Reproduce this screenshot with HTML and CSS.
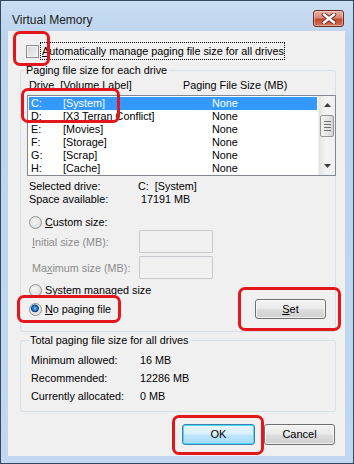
FILE: index.html
```html
<!DOCTYPE html>
<html lang="en">
<head>
    <meta charset="UTF-8">
    <meta name="viewport" content="width=device-width, initial-scale=1.0">
    <title>Virtual Memory</title>
    <link rel="stylesheet" href="styles.css">
</head>
<body>
    <div class="window">
        <div class="titlebar">
            <span class="title">Virtual Memory</span>
            <div class="close">
                <svg width="16" height="11" viewBox="0 0 16 11">
                    <path d="M3 1.5 L13 9.5 M13 1.5 L3 9.5" stroke="#6b2a22" stroke-width="4.4" stroke-linecap="round"/>
                    <path d="M3 1.5 L13 9.5 M13 1.5 L3 9.5" stroke="#fff" stroke-width="2.6" stroke-linecap="round"/>
                </svg>
            </div>
        </div>

        <div class="client">
            <div class="auto-row">
                <span class="checkbox"></span>
                <span class="focus-label"><u>A</u>utomatically manage paging file size for all drives</span>
            </div>

            <fieldset class="group group-drives">
                <legend>Paging file size for each drive</legend>
                <div class="list-head">
                    <span class="col-drive"><u>D</u>rive&nbsp; [Volume Label]</span>
                    <span>Paging File Size (MB)</span>
                </div>
                <div class="listbox">
                    <div class="rows">
                        <div class="row selected"><span class="c1">C:</span><span class="c2">[System]</span><span>None</span></div>
                        <div class="row"><span class="c1">D:</span><span class="c2">[X3 Terran Conflict]</span><span>None</span></div>
                        <div class="row"><span class="c1">E:</span><span class="c2">[Movies]</span><span>None</span></div>
                        <div class="row"><span class="c1">F:</span><span class="c2">[Storage]</span><span>None</span></div>
                        <div class="row"><span class="c1">G:</span><span class="c2">[Scrap]</span><span>None</span></div>
                        <div class="row"><span class="c1">H:</span><span class="c2">[Cache]</span><span>None</span></div>
                    </div>
                    <div class="scrollbar">
                        <div class="sb-btn">
                            <svg width="7" height="4" viewBox="0 0 7 4"><path d="M0 4 L3.5 0 L7 4 Z" fill="#3c3c3c"/></svg>
                        </div>
                        <div class="sb-track">
                            <div class="sb-thumb"><span></span><span></span><span></span><span></span></div>
                        </div>
                        <div class="sb-btn">
                            <svg width="7" height="4" viewBox="0 0 7 4"><path d="M0 0 L7 0 L3.5 4 Z" fill="#3c3c3c"/></svg>
                        </div>
                    </div>
                </div>

                <div class="info">
                    <div class="info-row"><span class="info-label">Selected drive:</span><span>C:&nbsp; [System]</span></div>
                    <div class="info-row"><span class="info-label">Space available:</span><span>&nbsp;17191 MB</span></div>
                </div>

                <div class="radio-row custom">
                    <span class="radio"></span><span><u>C</u>ustom size:</span>
                </div>
                <div class="size-row">
                    <span class="size-label"><u>I</u>nitial size (MB):</span>
                    <span class="textbox"></span>
                </div>
                <div class="size-row">
                    <span class="size-label">Ma<u>x</u>imum size (MB):</span>
                    <span class="textbox"></span>
                </div>
                <div class="radio-row system">
                    <span class="radio"></span><span>S<u>y</u>stem managed size</span>
                </div>
                <div class="last-row">
                    <div class="radio-row">
                        <span class="radio checked"></span><span><u>N</u>o paging file</span>
                    </div>
                    <button class="btn set-btn"><u>S</u>et</button>
                </div>
            </fieldset>

            <fieldset class="group group-total">
                <legend>Total paging file size for all drives</legend>
                <div class="total-row"><span class="total-label">Minimum allowed:</span><span>16 MB</span></div>
                <div class="total-row"><span class="total-label">Recommended:</span><span>12286 MB</span></div>
                <div class="total-row"><span class="total-label">Currently allocated:</span><span>0 MB</span></div>
            </fieldset>

            <div class="buttons">
                <button class="btn ok-btn">OK</button>
                <button class="btn cancel-btn">Cancel</button>
            </div>
        </div>

        <!-- red annotation marks drawn over the dialog -->
        <div class="mark mark-check"></div>
        <div class="mark mark-drive"></div>
        <div class="mark mark-nopaging"></div>
        <div class="mark mark-set"></div>
        <div class="mark mark-ok"></div>
    </div>
</body>
</html>
```

FILE: styles.css
```css
* {
    box-sizing: border-box;
}
body {
    margin: 0;
    padding: 0;
    background: #fff;
    font-family: 'Liberation Sans', Arial, sans-serif;
    font-size: 10.8px;
    color: #000;
    white-space: nowrap;
}
u {
    text-decoration: underline;
    text-underline-offset: 1px;
}
.window {
    position: relative;
    width: 354px;
    height: 464px;
    border: 1px solid #34495f;
    background: linear-gradient(180deg, #c9def3 0%, #bcd3ec 40px, #c1d8f0 100%);
    padding: 0 8px 7px 7px;
    display: flex;
    flex-direction: column;
}
.titlebar {
    height: 30px;
    display: flex;
    align-items: flex-start;
    justify-content: space-between;
}
.title {
    margin: 11px 0 0 4px;
    font-size: 12px;
    color: #1a1a1a;
    line-height: 16px;
}
.close {
    margin: 9px 1px 0 0;
    width: 31px;
    height: 17px;
    border: 1px solid #6a2b25;
    border-radius: 3px;
    background: linear-gradient(180deg, #eab3a6 0%, #d98672 45%, #c4492f 55%, #d2735c 100%);
    box-shadow: inset 0 0 0 1px rgba(255, 220, 210, 0.5);
    display: flex;
    align-items: center;
    justify-content: center;
}
.close svg {
    display: block;
}
.client {
    flex: 1;
    background: #f0f0f0;
    padding: 11px 9px 0 12px;
}

/* checkbox line */
.auto-row {
    display: flex;
    align-items: center;
    height: 18px;
    margin-left: 6px;
}
.checkbox {
    width: 13px;
    height: 13px;
    border: 1px solid #8e8f8f;
    background: linear-gradient(135deg, #d4d4d4, #f4f4f4);
    box-shadow: inset 0 0 0 1px #f4f4f4;
    margin-right: 1px;
}
.focus-label {
    outline: 1px dotted #000;
    outline-offset: -1px;
    padding: 0 1px 0 2px;
    line-height: 18px;
}

/* group boxes */
.group {
    margin: 3px 0 0 0;
    padding: 0 0 12px 6px;
    border: 1px solid #d5dfe5;
    border-radius: 3px;
    min-width: 0;
}
.group legend {
    padding: 0 2px 0 1px;
    margin-left: -2px;
    line-height: 15px;
}
.list-head {
    display: flex;
    line-height: 15px;
    padding-left: 2px;
}
.col-drive {
    width: 154px;
}
.listbox {
    display: flex;
    height: 81px;
    margin-top: 2px;
    border: 1px solid #828790;
    background: #fff;
    margin-right: -1px;
}
.rows {
    flex: 1;
    padding: 1px 1px 0 1px;
}
.row {
    display: flex;
    height: 13px;
    line-height: 13px;
    padding-left: 2px;
}
.row.selected {
    background: #3399ff;
    color: #fff;
}
.c1 {
    width: 32px;
}
.c2 {
    width: 149px;
}
.scrollbar {
    width: 17px;
    display: flex;
    flex-direction: column;
    background: linear-gradient(90deg, #e3e3e3, #f4f4f4 40%, #f0f0f0);
    border-left: 1px solid #efefef;
}
.sb-btn {
    height: 18px;
    display: flex;
    align-items: center;
    justify-content: center;
}
.sb-track {
    flex: 1;
    padding: 1px 1px 0 1px;
}
.sb-thumb {
    height: 22px;
    border: 1px solid #979797;
    border-radius: 2px;
    background: linear-gradient(90deg, #f2f2f2, #e6e6e6 50%, #d4d4d4);
    display: flex;
    flex-direction: column;
    justify-content: center;
    align-items: center;
    gap: 2px;
}
.sb-thumb span {
    width: 7px;
    height: 1px;
    background: #6f6f6f;
}
.info {
    margin-top: 4px;
    padding-left: 2px;
}
.info-row {
    display: flex;
    height: 13px;
    line-height: 13px;
}
.info-label {
    width: 109px;
}
.radio-row {
    display: flex;
    align-items: center;
    height: 16px;
    margin-left: 2px;
}
.radio-row.custom {
    margin-top: 8px;
}
.radio-row.system {
    margin-top: 3px;
}
.radio {
    width: 13px;
    height: 13px;
    border-radius: 50%;
    border: 1px solid #8e8f8f;
    background: radial-gradient(circle at 40% 40%, #f6f6f6, #d6d6d6);
    margin-right: 3px;
}
.radio.checked {
    background: radial-gradient(circle at 45% 40%, #8ad0ff 0, #2a7ccf 2px, #0d3d7a 3.5px, #e9e9e9 4.3px, #d9d9d9 100%);
}
.size-row {
    display: flex;
    align-items: center;
    height: 23px;
    margin-top: 0;
    padding-left: 5px;
    color: #8b8b8b;
}
.size-row + .size-row {
    margin-top: 3px;
}
.size-label {
    width: 107px;
}
.textbox {
    width: 74px;
    height: 23px;
    border: 1px solid #c6c9ce;
    border-radius: 1px;
    background: #f1f1f1;
}
.last-row {
    display: flex;
    align-items: center;
    justify-content: space-between;
    height: 20px;
    margin-top: 1px;
    padding-right: 9px;
}
.btn {
    font-family: inherit;
    font-size: 11px;
    color: #000;
    height: 21px;
    border: 1px solid #707070;
    border-radius: 3px;
    background: linear-gradient(180deg, #f2f2f2 0%, #ebebeb 48%, #dddddd 52%, #cfcfcf 100%);
    box-shadow: inset 0 0 0 1px rgba(255, 255, 255, 0.7);
    padding: 0;
    line-height: 17px;
}
.set-btn {
    width: 71px;
    height: 20px;
}
.group-total {
    margin-top: 1px;
    padding: 3px 0 6px 10px;
}
.total-row {
    display: flex;
    height: 18px;
    line-height: 18px;
}
.total-label {
    width: 109px;
}
.buttons {
    display: flex;
    justify-content: flex-end;
    gap: 9px;
    margin-top: 12px;
    padding-right: 1px;
}
.ok-btn {
    width: 73px;
    border-color: #3c7fb1;
    background: linear-gradient(180deg, #eaf6fd 0%, #d9f0fc 48%, #bee6fd 52%, #a7d9f5 100%);
    box-shadow: inset 0 0 0 1px #48d8fb;
}
.cancel-btn {
    width: 71px;
}

/* red marks */
.mark {
    position: absolute;
    border: 3px solid #e4161d;
    border-radius: 7px;
}
.mark-check {
    left: 12px;
    top: 30px;
    width: 37px;
    height: 35px;
}
.mark-drive {
    left: 20px;
    top: 87px;
    width: 99px;
    height: 35px;
}
.mark-nopaging {
    left: 16px;
    top: 294px;
    width: 104px;
    height: 28px;
}
.mark-set {
    left: 237px;
    top: 286px;
    width: 103px;
    height: 44px;
}
.mark-ok {
    left: 171px;
    top: 414px;
    width: 92px;
    height: 40px;
}
```
